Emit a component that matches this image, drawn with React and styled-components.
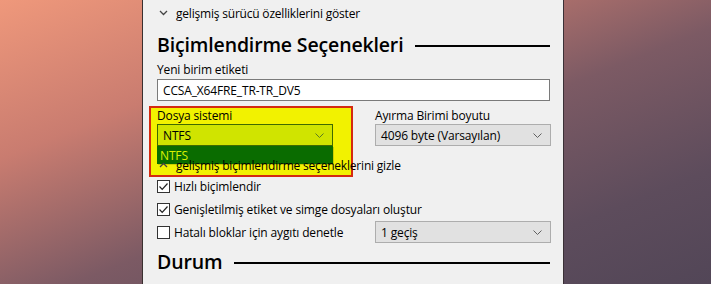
import React from "react";
import styled, { createGlobalStyle } from "styled-components";

const Global = createGlobalStyle`
  html, body { margin: 0; padding: 0; }
  body {
    width: 711px; height: 284px; overflow: hidden;
    background: linear-gradient(to bottom right, #ef987b 0%, #c97c70 28%, #7c5a64 55%, #5d4c5c 80%, #524657 100%);
    font-family: "Open Sans", "Noto Sans", sans-serif;
  }
`;

const Stage = styled.div`
  display: flex;
  height: 284px;
`;

const Window = styled.div`
  margin-left: 142px;
  width: 422px;
  height: 284px;
  background: #f0f0f0;
  border-left: 1px solid #3a3030;
  border-right: 1px solid #3a3036;
  box-sizing: border-box;
  padding: 0 13px 0 14px;
  display: flex;
  flex-direction: column;
  font-size: 12px;
  color: #000;
`;

const Expander = styled.div`
  display: flex;
  align-items: center;
  height: 16px;
  margin-top: ${p => p.$top || 0}px;
  gap: 8px;
  font-size: 12px;
  letter-spacing: -0.2px;
  padding-left: 2px;
  position: relative;
  z-index: 1;
`;

const SectionHead = styled.div`
  display: flex;
  align-items: center;
  margin-top: ${p => p.$top}px;
  height: 24px;
  font-size: 19.5px;
  font-weight: 600;
  letter-spacing: -0.15px;
  gap: 12px;
`;

const Rule = styled.div`
  flex: 1;
  height: 2px;
  background: #000;
  margin-top: 3px;
`;

const Label = styled.div`
  height: 16px;
  line-height: 16px;
  font-size: 12px;
  letter-spacing: -0.15px;
  margin-top: ${p => p.$top || 0}px;
`;

const TextBox = styled.div`
  margin-top: 1px;
  height: 22px;
  box-sizing: border-box;
  border: 1px solid #7a7a7a;
  background: #fff;
  padding-left: 5px;
  display: flex;
  align-items: center;
  font-size: 12px;
  letter-spacing: -0.15px;
`;

const Columns = styled.div`
  display: grid;
  grid-template-columns: 176px 176px;
  column-gap: 42px;
  margin-top: ${p => p.$top || 0}px;
  position: relative;
`;

const Field = styled.div`
  display: flex;
  flex-direction: column;
  position: relative;
  z-index: 1;
`;

const Highlight = styled.div`
  position: absolute;
  left: -8px;
  top: -2px;
  width: 204px;
  height: 71px;
  box-sizing: border-box;
  background: #f2f200;
  border: 2px solid #d42a10;
  z-index: 0;
`;

const Select = styled.div`
  height: 22px;
  box-sizing: border-box;
  border: 1px solid ${p => (p.$hot ? "#3f6a00" : "#adadad")};
  background: ${p => (p.$hot ? "#d0e400" : "#e1e1e1")};
  display: flex;
  align-items: center;
  justify-content: space-between;
  padding: 0 8px 0 5px;
  font-size: 12px;
  letter-spacing: -0.15px;
  position: relative;
`;

const Menu = styled.div`
  position: absolute;
  left: -1px;
  top: 21px;
  width: 176px;
  height: 18px;
  background: #0a6c00;
  color: #d8f000;
  font-size: 12px;
  padding-left: 3px;
  box-sizing: border-box;
  display: flex;
  align-items: center;
  z-index: 3;
  box-shadow: 1px 1px 0 rgba(0,0,0,0.15);
`;

const CheckRow = styled.div`
  display: flex;
  align-items: center;
  height: 22px;
  margin-top: ${p => p.$top || 0}px;
  gap: 4px;
  font-size: 12px;
  letter-spacing: -0.15px;
`;

const Box = styled.span`
  width: 13px;
  height: 13px;
  box-sizing: border-box;
  border: 1px solid #333;
  background: #fff;
  display: inline-flex;
  align-items: center;
  justify-content: center;
`;

const BottomRow = styled.div`
  display: grid;
  grid-template-columns: 218px 176px;
  align-items: center;
  margin-top: 1px;
`;

const Chevron = ({ up, color = "#444", w = 9 }) => (
  <svg width={w} height="6" viewBox="0 0 9 6">
    <path d={up ? "M1 5 L4.5 1.5 L8 5" : "M1 1 L4.5 4.5 L8 1"} fill="none" stroke={color} strokeWidth="1.3" />
  </svg>
);

const SelChevron = ({ color = "#606060" }) => (
  <svg width="9" height="5" viewBox="0 0 9 5">
    <path d="M0.5 0.5 L4.5 4.5 L8.5 0.5" fill="none" stroke={color} strokeWidth="1" />
  </svg>
);

const Checkbox = ({ checked, children }) => (
  <>
    <Box>
      {checked && (
        <svg width="11" height="11" viewBox="0 0 11 11">
          <path d="M1.5 5.5 L4.2 8.3 L9.5 2.5" fill="none" stroke="#222" strokeWidth="1.2" />
        </svg>
      )}
    </Box>
    <span>{children}</span>
  </>
);

export default function App() {
  return (
    <>
      <Global />
      <Stage>
        <Window>
          <Expander $top={5}>
            <Chevron />
            <span>gelişmiş sürücü özelliklerini göster</span>
          </Expander>
          <SectionHead $top={11}>
            <span>Biçimlendirme Seçenekleri</span>
            <Rule />
          </SectionHead>
          <Label $top={6}>Yeni birim etiketi</Label>
          <TextBox>CCSA_X64FRE_TR-TR_DV5</TextBox>
          <Columns $top={7}>
            <Highlight />
            <Field>
              <Label>Dosya sistemi</Label>
              <Select $hot>
                <span>NTFS</span>
                <SelChevron color="#5a7a20" />
                <Menu>NTFS</Menu>
              </Select>
            </Field>
            <Field>
              <Label>Ayırma Birimi boyutu</Label>
              <Select>
                <span>4096 byte (Varsayılan)</span>
                <SelChevron />
              </Select>
            </Field>
          </Columns>
          <Expander $top={11}>
            <Chevron up />
            <span>gelişmiş biçimlendirme seçeneklerini gizle</span>
          </Expander>
          <CheckRow $top={2}>
            <Checkbox checked>Hızlı biçimlendir</Checkbox>
          </CheckRow>
          <CheckRow $top={1}>
            <Checkbox checked>Genişletilmiş etiket ve simge dosyaları oluştur</Checkbox>
          </CheckRow>
          <BottomRow>
            <CheckRow>
              <Checkbox>Hatalı bloklar için aygıtı denetle</Checkbox>
            </CheckRow>
            <Select>
              <span>1 geçiş</span>
              <SelChevron />
            </Select>
          </BottomRow>
          <SectionHead $top={6}>
            <span>Durum</span>
            <Rule />
          </SectionHead>
        </Window>
      </Stage>
    </>
  );
}
